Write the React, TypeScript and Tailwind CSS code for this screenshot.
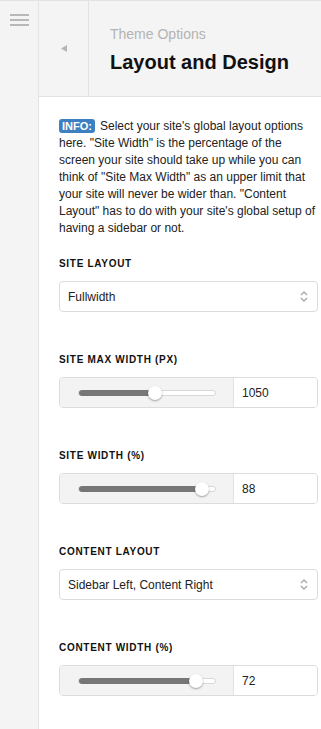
import React from 'react';

const font = { fontFamily: '"Liberation Sans", Arial, sans-serif' };

const Label = ({ children }: { children: React.ReactNode }) => (
  <div className="text-[10px] leading-[13px] font-bold tracking-[0.7px] text-[#111] uppercase mb-[11px]">
    {children}
  </div>
);

const SelectBox = ({ value }: { value: string }) => (
  <div className="h-[31px] flex items-center justify-between border border-[#dcdcdc] rounded-[4px] bg-white pl-[8px] pr-[9px] text-[12px] text-[#222]">
    <span>{value}</span>
    <svg width="8" height="13" viewBox="0 0 8 13" fill="none" stroke="#a8a8a8" strokeWidth="1.4">
      <path d="M1 5 L4 2 L7 5" />
      <path d="M1 8 L4 11 L7 8" />
    </svg>
  </div>
);

const RangeRow = ({ value, pos }: { value: string; pos: number }) => (
  <div className="h-[31px] flex border border-[#dcdcdc] rounded-[4px] overflow-hidden">
    <div className="w-[174px] bg-[#f3f3f3] border-r border-[#e2e2e2] flex items-center pl-[18px]">
      <div className="relative w-[138px] h-[6px] rounded-full bg-white border border-[#d8d8d8]">
        <div className="absolute left-0 top-[-1px] h-[6px] rounded-full bg-[#777]" style={{ width: pos }} />
        <div
          className="absolute top-[-5px] w-[14px] h-[14px] rounded-full bg-white shadow-[0_1px_2px_rgba(0,0,0,0.35)]"
          style={{ left: pos - 7 }}
        />
      </div>
    </div>
    <div className="flex-1 bg-white flex items-center pl-[8px] text-[12px] text-[#222]">{value}</div>
  </div>
);

export default function App() {
  return (
    <div className="flex w-[321px] h-[729px] overflow-hidden border-t border-[#e2e2e2] bg-white" style={font}>
      <aside className="w-[39px] shrink-0 bg-[#f4f4f4] border-r border-[#e4e4e4] flex justify-center pt-[13px]">
        <div className="flex flex-col gap-[3px] w-[19px]">
          <span className="h-[2px] bg-[#b8b8b8]" />
          <span className="h-[2px] bg-[#b8b8b8]" />
          <span className="h-[2px] bg-[#b8b8b8]" />
        </div>
      </aside>
      <main className="flex-1 flex flex-col min-w-0">
        <header className="h-[96px] shrink-0 flex bg-[#f4f4f4] border-b border-[#e2e2e2]">
          <div className="w-[50px] border-r border-[#e2e2e2] flex items-center justify-center">
            <svg width="6" height="7" viewBox="0 0 6 7">
              <path d="M6 0 L0 3.5 L6 7 Z" fill="#b4b4b4" />
            </svg>
          </div>
          <div className="pl-[21px] pt-[25px]">
            <div className="text-[14px] leading-[16px] text-[#b3b3b3]">Theme Options</div>
            <div className="mt-[8px] text-[20px] leading-[24px] font-bold text-[#111]">Layout and Design</div>
          </div>
        </header>
        <section className="flex-1 pl-[20px] pr-[3px] pt-[21px]">
          <p className="text-[12px] leading-[17px] text-[#222]">
            <span className="inline-block bg-[#3d7fc0] text-white font-bold text-[11px] leading-[14px] px-[3px] rounded-[3px] mr-[5px]">
              INFO:
            </span>
            Select your site's global layout options here. "Site Width" is the percentage of the screen your site
            should take up while you can think of "Site Max Width" as an upper limit that your site will never be wider
            than. "Content Layout" has to do with your site's global setup of having a sidebar or not.
          </p>
          <div className="mt-[20px]">
            <Label>Site Layout</Label>
            <SelectBox value="Fullwidth" />
          </div>
          <div className="mt-[41px]">
            <Label>Site Max Width (px)</Label>
            <RangeRow value="1050" pos={76} />
          </div>
          <div className="mt-[41px]">
            <Label>Site Width (%)</Label>
            <RangeRow value="88" pos={123} />
          </div>
          <div className="mt-[41px]">
            <Label>Content Layout</Label>
            <SelectBox value="Sidebar Left, Content Right" />
          </div>
          <div className="mt-[41px]">
            <Label>Content Width (%)</Label>
            <RangeRow value="72" pos={117} />
          </div>
        </section>
      </main>
    </div>
  );
}
